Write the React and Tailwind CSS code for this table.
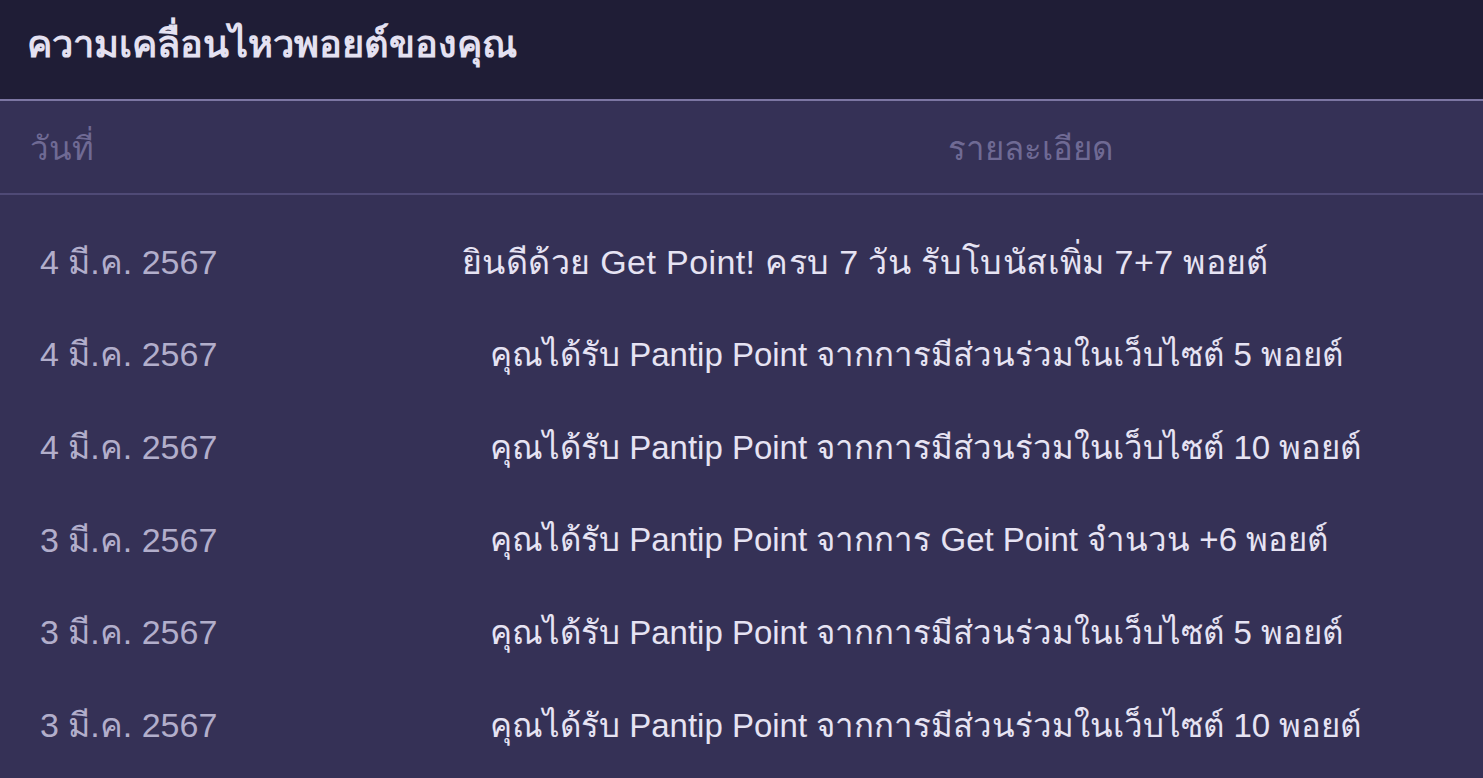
import React from 'react';

const rows = [
  { date: '4 มี.ค. 2567', detail: 'ยินดีด้วย Get Point! ครบ 7 วัน รับโบนัสเพิ่ม 7+7 พอยต์', shift: true },
  { date: '4 มี.ค. 2567', detail: 'คุณได้รับ Pantip Point จากการมีส่วนร่วมในเว็บไซต์ 5 พอยต์' },
  { date: '4 มี.ค. 2567', detail: 'คุณได้รับ Pantip Point จากการมีส่วนร่วมในเว็บไซต์ 10 พอยต์' },
  { date: '3 มี.ค. 2567', detail: 'คุณได้รับ Pantip Point จากการ Get Point จำนวน +6 พอยต์' },
  { date: '3 มี.ค. 2567', detail: 'คุณได้รับ Pantip Point จากการมีส่วนร่วมในเว็บไซต์ 5 พอยต์' },
  { date: '3 มี.ค. 2567', detail: 'คุณได้รับ Pantip Point จากการมีส่วนร่วมในเว็บไซต์ 10 พอยต์' },
];

export default function App() {
  return (
    <div
      className="min-h-screen w-full bg-[#353156] overflow-hidden"
      style={{ fontFamily: '"Liberation Sans", Tahoma, "Noto Sans", sans-serif' }}
    >
      {/* Title bar */}
      <div className="h-[101px] bg-[#1f1d36] border-b-2 border-[#7c76a3] px-[27px] pt-[20px]">
        <h1 className="text-[38px] leading-[48px] font-bold text-[#e4e1f1]">ความเคลื่อนไหวพอยต์ของคุณ</h1>
      </div>

      {/* Table header */}
      <div className="h-[94px] flex items-center border-b-2 border-[#4f4a76] pt-[4px]">
        <div className="w-[577px] pl-[30px] text-[33px] text-[#6f6a94]">วันที่</div>
        <div className="flex-1 text-center text-[33px] text-[#6f6a94]">รายละเอียด</div>
      </div>

      {/* Rows */}
      <div className="pt-[21px]">
        {rows.map((r, i) => (
          <div key={i} className="h-[92.6px] flex items-center">
            <div className="w-[462px] pl-[40px] text-[34px] text-[#b2aecb]">{r.date}</div>
            <div
              className={`${r.shift ? 'pl-0 text-[34px] tracking-[0.4px]' : 'pl-[28px] text-[33px]'} text-[#e6e3f3] whitespace-nowrap`}
            >
              {r.detail}
            </div>
          </div>
        ))}
      </div>
    </div>
  );
}
